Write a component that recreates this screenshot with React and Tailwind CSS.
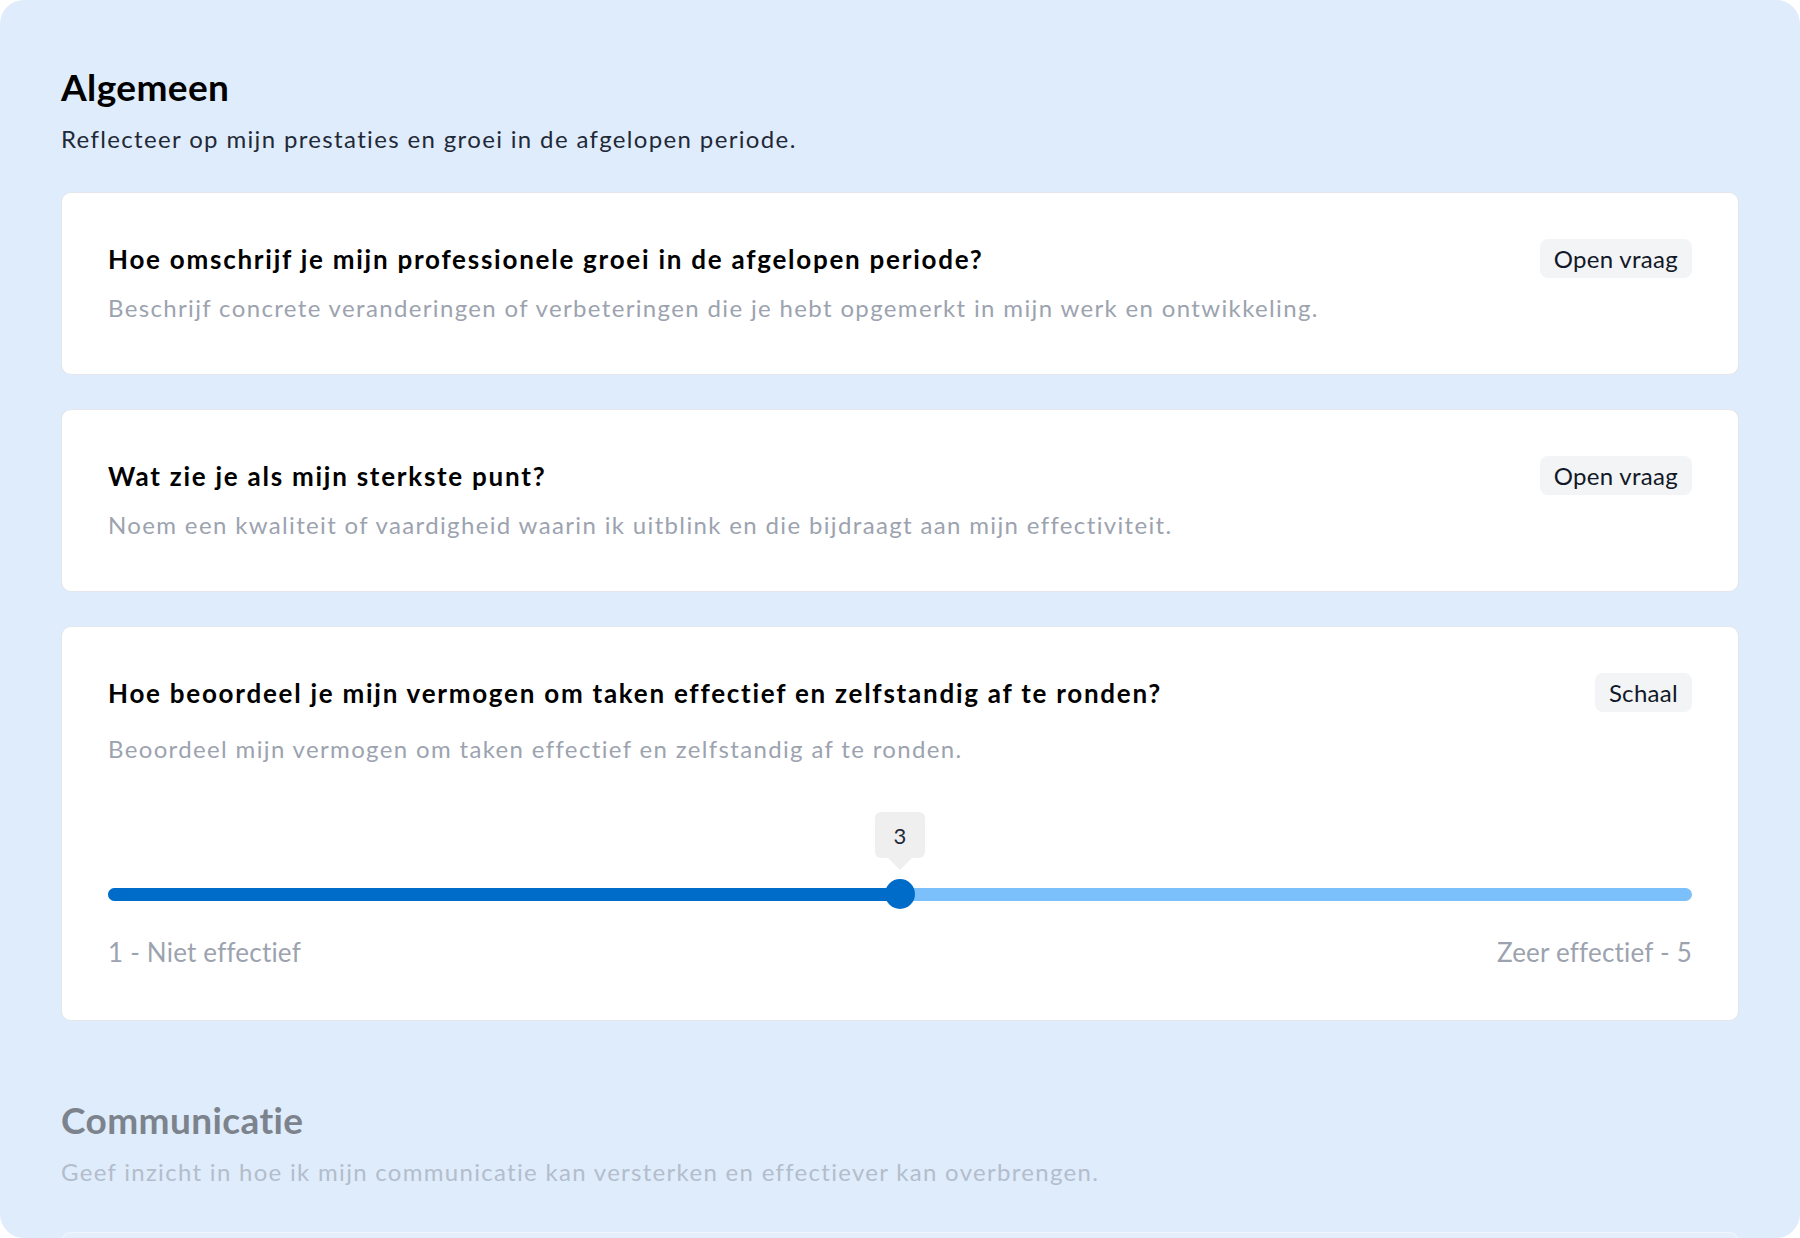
import React from 'react';

const QUESTIONS = [
  {
    title: 'Hoe omschrijf je mijn professionele groei in de afgelopen periode?',
    hint: 'Beschrijf concrete veranderingen of verbeteringen die je hebt opgemerkt in mijn werk en ontwikkeling.',
    type: 'Open vraag',
  },
  {
    title: 'Wat zie je als mijn sterkste punt?',
    hint: 'Noem een kwaliteit of vaardigheid waarin ik uitblink en die bijdraagt aan mijn effectiviteit.',
    type: 'Open vraag',
  },
];

const Badge = ({ children }) => (
  <span className="shrink-0 h-[39px] px-[14px] flex items-center rounded-[8px] bg-[#f3f4f6] text-[24px] tracking-[0.3px] text-[#111827]">
    {children}
  </span>
);

const QuestionHeader = ({ title, type }) => (
  <div className="flex items-center justify-between gap-6">
    <h3 className="text-[26px] leading-[36px] font-bold tracking-[1.75px] text-black">{title}</h3>
    <Badge>{type}</Badge>
  </div>
);

const Scale = ({ value, min, max, minLabel, maxLabel }) => {
  const pct = ((value - min) / (max - min)) * 100;
  return (
    <div className="mt-[47px]">
      <div className="relative pt-[67px]">
        {/* tooltip */}
        <div
          className="absolute top-0 -translate-x-1/2 flex flex-col items-center"
          style={{ left: `${pct}%` }}
        >
          <div className="w-[50px] h-[46px] rounded-[6px] bg-[#efefef] flex items-center justify-center text-[22px] text-[#1f2937]">
            {value}
          </div>
          <div className="w-0 h-0 border-l-[12px] border-r-[12px] border-t-[12px] border-l-transparent border-r-transparent border-t-[#efefef]" />
        </div>
        <div className="relative h-[30px] flex items-center">
          <div className="w-full h-[13px] rounded-full bg-[#7cc0fb] overflow-hidden">
            <div className="h-full bg-[#006cc9]" style={{ width: `${pct}%` }} />
          </div>
          <div
            className="absolute top-0 w-[30px] h-[30px] -translate-x-1/2 rounded-full bg-[#006cc9]"
            style={{ left: `${pct}%` }}
          />
        </div>
      </div>
      <div className="mt-[25px] flex justify-between text-[26px] leading-[36px] tracking-[0.2px] text-[#9ca3af]">
        <span>{minLabel}</span>
        <span>{maxLabel}</span>
      </div>
    </div>
  );
};

const Card = ({ children }) => (
  <div className="rounded-[10px] border border-[#e3e6eb] bg-white px-[46px] pt-[46px] pb-[50px]">
    {children}
  </div>
);

export default function App() {
  return (
    <div className="min-h-screen bg-white" style={{ fontFamily: 'Lato, "Open Sans", sans-serif' }}>
      <div className="h-[1238px] overflow-hidden rounded-[24px] bg-[#dfecfc] px-[61px] pt-[65px]">
        <section>
          <h2 className="text-[37px] leading-[44px] font-bold tracking-[0.4px] text-black">Algemeen</h2>
          <p className="mt-[14px] text-[24px] leading-[32px] tracking-[1.35px] text-[#1f2937]">
            Reflecteer op mijn prestaties en groei in de afgelopen periode.
          </p>

          <div className="mt-[37px] flex flex-col gap-[34px]">
            {QUESTIONS.map((q) => (
              <Card key={q.title}>
                <QuestionHeader title={q.title} type={q.type} />
                <p className="mt-[14px] text-[24px] leading-[32px] tracking-[1.35px] text-[#9ca3af]">{q.hint}</p>
              </Card>
            ))}

            <Card>
              <QuestionHeader
                title="Hoe beoordeel je mijn vermogen om taken effectief en zelfstandig af te ronden?"
                type="Schaal"
              />
              <p className="mt-[21px] text-[24px] leading-[32px] tracking-[1.35px] text-[#9ca3af]">
                Beoordeel mijn vermogen om taken effectief en zelfstandig af te ronden.
              </p>
              <Scale value={3} min={1} max={5} minLabel="1 - Niet effectief" maxLabel="Zeer effectief - 5" />
            </Card>
          </div>
        </section>

        <section className="mt-[77px]">
          <h2 className="text-[37px] leading-[44px] font-bold tracking-[0.4px] text-[#7c838c]">Communicatie</h2>
          <p className="mt-[14px] text-[24px] leading-[32px] tracking-[1.3px] text-[#b3bdcb]">
            Geef inzicht in hoe ik mijn communicatie kan versterken en effectiever kan overbrengen.
          </p>
          <div className="mt-[44px] h-[120px] rounded-[10px] border border-white/40 bg-white/20" />
        </section>
      </div>
    </div>
  );
}
